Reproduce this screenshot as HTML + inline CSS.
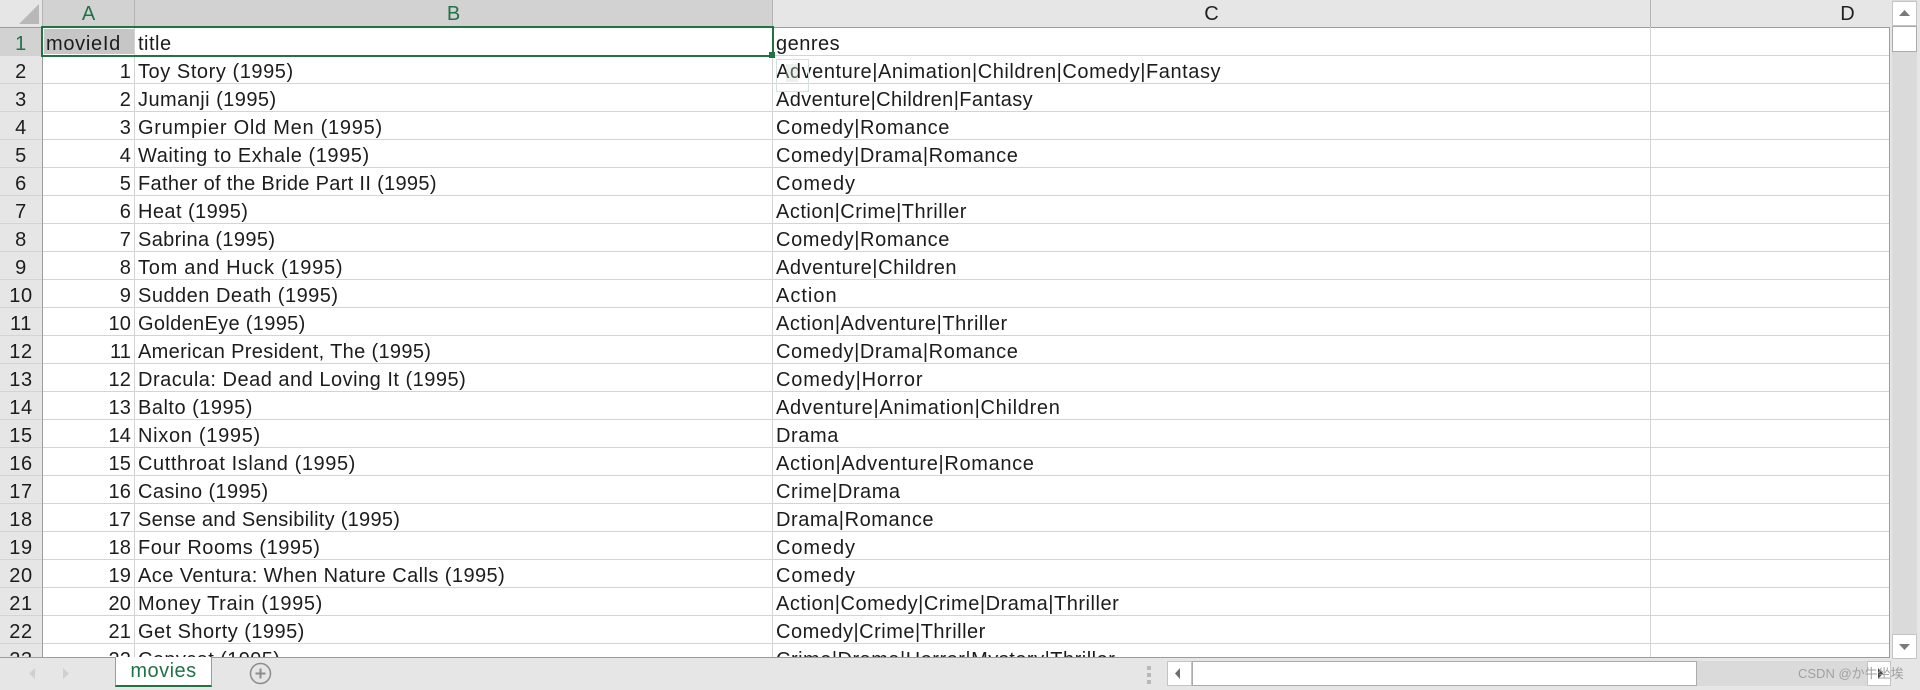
<!DOCTYPE html>
<html><head><meta charset="utf-8"><style>
html,body{margin:0;padding:0;background:#e6e6e6}
#p{position:relative;width:1920px;height:690px;overflow:hidden;background:#e6e6e6;font-family:"Liberation Sans","Noto Sans CJK SC",sans-serif;color:#1c1c1c}
#p div{position:absolute;box-sizing:border-box}
.t{font-size:20px;line-height:28px;height:28px;white-space:nowrap;letter-spacing:.1px}
.n{text-align:right;width:88px;left:43px}
.r{text-align:center;width:42px;left:0;height:28px;font-size:20px;line-height:28px;letter-spacing:.6px}
.h{height:1px;left:0;width:1889px;background:#d4d4d4}
.v{width:1px;top:27px;height:630px;background:#d4d4d4}
.hc{font-size:20px;line-height:27px;top:1px;height:27px;text-align:center}
</style></head><body><div id="p">
<div style="left:0;top:0;width:1920px;height:27px;background:#e6e6e6"></div>
<div style="left:43px;top:0;width:730px;height:27px;background:#d2d2d2"></div>
<div style="left:42px;top:0;width:1px;height:27px;background:#b4b4b4"></div>
<div style="left:134px;top:0;width:1px;height:27px;background:#b4b4b4"></div>
<div style="left:772px;top:0;width:1px;height:27px;background:#b4b4b4"></div>
<div style="left:1650px;top:0;width:1px;height:27px;background:#b4b4b4"></div>
<svg style="position:absolute;left:0;top:0" width="42" height="27"><polygon points="19,24 39,24 39,4" fill="#b8b8b8"/></svg>
<div class="hc" style="left:43px;width:91px;color:#217346">A</div>
<div class="hc" style="left:135px;width:637px;color:#217346">B</div>
<div class="hc" style="left:773px;width:877px;color:#222">C</div>
<div class="hc" style="left:1840px;width:15px;color:#222">D</div>
<div style="left:0;top:27px;width:1889px;height:1px;background:#9c9c9c"></div>
<div style="left:43px;top:28px;width:1846px;height:629px;background:#fff"></div>
<div class="h" style="top:55px"></div><div class="h" style="top:83px"></div><div class="h" style="top:111px"></div><div class="h" style="top:139px"></div><div class="h" style="top:167px"></div><div class="h" style="top:195px"></div><div class="h" style="top:223px"></div><div class="h" style="top:251px"></div><div class="h" style="top:279px"></div><div class="h" style="top:307px"></div><div class="h" style="top:335px"></div><div class="h" style="top:363px"></div><div class="h" style="top:391px"></div><div class="h" style="top:419px"></div><div class="h" style="top:447px"></div><div class="h" style="top:475px"></div><div class="h" style="top:503px"></div><div class="h" style="top:531px"></div><div class="h" style="top:559px"></div><div class="h" style="top:587px"></div><div class="h" style="top:615px"></div><div class="h" style="top:643px"></div>
<div class="v" style="left:134px"></div><div class="v" style="left:772px"></div><div class="v" style="left:1650px"></div>
<div style="left:42px;top:28px;width:1px;height:629px;background:#9c9c9c"></div>
<div style="left:1889px;top:27px;width:1px;height:630px;background:#9c9c9c"></div>
<div style="left:0;top:28px;width:42px;height:28px;background:#d2d2d2"></div>
<div class="r" style="top:30px;color:#217346">1</div>
<div class="r" style="top:58px">2</div><div class="r" style="top:86px">3</div><div class="r" style="top:114px">4</div><div class="r" style="top:142px">5</div><div class="r" style="top:170px">6</div><div class="r" style="top:198px">7</div><div class="r" style="top:226px">8</div><div class="r" style="top:254px">9</div><div class="r" style="top:282px">10</div><div class="r" style="top:310px">11</div><div class="r" style="top:338px">12</div><div class="r" style="top:366px">13</div><div class="r" style="top:394px">14</div><div class="r" style="top:422px">15</div><div class="r" style="top:450px">16</div><div class="r" style="top:478px">17</div><div class="r" style="top:506px">18</div><div class="r" style="top:534px">19</div><div class="r" style="top:562px">20</div><div class="r" style="top:590px">21</div><div class="r" style="top:618px">22</div><div class="r" style="top:646px">23</div>
<div style="left:44px;top:29px;width:90px;height:25px;background:#c6c6c6"></div>
<div class="t" style="left:46px;top:30px;letter-spacing:.7px">movieId</div><div class="t" style="left:138px;top:30px;letter-spacing:.5px">title</div><div class="t" style="left:776px;top:30px;letter-spacing:.5px">genres</div>
<div class="t n" style="top:58px">1</div><div class="t" style="left:138px;top:58px;letter-spacing:.56px">Toy Story (1995)</div><div class="t" style="left:776px;top:58px;letter-spacing:.56px">Adventure|Animation|Children|Comedy|Fantasy</div>
<div class="t n" style="top:86px">2</div><div class="t" style="left:138px;top:86px;letter-spacing:.45px">Jumanji (1995)</div><div class="t" style="left:776px;top:86px;letter-spacing:.38px">Adventure|Children|Fantasy</div>
<div class="t n" style="top:114px">3</div><div class="t" style="left:138px;top:114px;letter-spacing:.74px">Grumpier Old Men (1995)</div><div class="t" style="left:776px;top:114px;letter-spacing:.62px">Comedy|Romance</div>
<div class="t n" style="top:142px">4</div><div class="t" style="left:138px;top:142px;letter-spacing:.56px">Waiting to Exhale (1995)</div><div class="t" style="left:776px;top:142px;letter-spacing:.6px">Comedy|Drama|Romance</div>
<div class="t n" style="top:170px">5</div><div class="t" style="left:138px;top:170px;letter-spacing:.32px">Father of the Bride Part II (1995)</div><div class="t" style="left:776px;top:170px;letter-spacing:.9px">Comedy</div>
<div class="t n" style="top:198px">6</div><div class="t" style="left:138px;top:198px;letter-spacing:.43px">Heat (1995)</div><div class="t" style="left:776px;top:198px;letter-spacing:.5px">Action|Crime|Thriller</div>
<div class="t n" style="top:226px">7</div><div class="t" style="left:138px;top:226px;letter-spacing:.36px">Sabrina (1995)</div><div class="t" style="left:776px;top:226px;letter-spacing:.62px">Comedy|Romance</div>
<div class="t n" style="top:254px">8</div><div class="t" style="left:138px;top:254px;letter-spacing:.74px">Tom and Huck (1995)</div><div class="t" style="left:776px;top:254px;letter-spacing:.57px">Adventure|Children</div>
<div class="t n" style="top:282px">9</div><div class="t" style="left:138px;top:282px;letter-spacing:.49px">Sudden Death (1995)</div><div class="t" style="left:776px;top:282px;letter-spacing:1px">Action</div>
<div class="t n" style="top:310px">10</div><div class="t" style="left:138px;top:310px;letter-spacing:.33px">GoldenEye (1995)</div><div class="t" style="left:776px;top:310px;letter-spacing:.54px">Action|Adventure|Thriller</div>
<div class="t n" style="top:338px">11</div><div class="t" style="left:138px;top:338px;letter-spacing:.34px">American President, The (1995)</div><div class="t" style="left:776px;top:338px;letter-spacing:.6px">Comedy|Drama|Romance</div>
<div class="t n" style="top:366px">12</div><div class="t" style="left:138px;top:366px;letter-spacing:.5px">Dracula: Dead and Loving It (1995)</div><div class="t" style="left:776px;top:366px;letter-spacing:.85px">Comedy|Horror</div>
<div class="t n" style="top:394px">13</div><div class="t" style="left:138px;top:394px;letter-spacing:.5px">Balto (1995)</div><div class="t" style="left:776px;top:394px;letter-spacing:.7px">Adventure|Animation|Children</div>
<div class="t n" style="top:422px">14</div><div class="t" style="left:138px;top:422px;letter-spacing:.7px">Nixon (1995)</div><div class="t" style="left:776px;top:422px;letter-spacing:.6px">Drama</div>
<div class="t n" style="top:450px">15</div><div class="t" style="left:138px;top:450px;letter-spacing:.58px">Cutthroat Island (1995)</div><div class="t" style="left:776px;top:450px;letter-spacing:.66px">Action|Adventure|Romance</div>
<div class="t n" style="top:478px">16</div><div class="t" style="left:138px;top:478px;letter-spacing:.38px">Casino (1995)</div><div class="t" style="left:776px;top:478px;letter-spacing:.55px">Crime|Drama</div>
<div class="t n" style="top:506px">17</div><div class="t" style="left:138px;top:506px;letter-spacing:.27px">Sense and Sensibility (1995)</div><div class="t" style="left:776px;top:506px;letter-spacing:.56px">Drama|Romance</div>
<div class="t n" style="top:534px">18</div><div class="t" style="left:138px;top:534px;letter-spacing:.53px">Four Rooms (1995)</div><div class="t" style="left:776px;top:534px;letter-spacing:.9px">Comedy</div>
<div class="t n" style="top:562px">19</div><div class="t" style="left:138px;top:562px;letter-spacing:.43px">Ace Ventura: When Nature Calls (1995)</div><div class="t" style="left:776px;top:562px;letter-spacing:.9px">Comedy</div>
<div class="t n" style="top:590px">20</div><div class="t" style="left:138px;top:590px;letter-spacing:.64px">Money Train (1995)</div><div class="t" style="left:776px;top:590px;letter-spacing:.53px">Action|Comedy|Crime|Drama|Thriller</div>
<div class="t n" style="top:618px">21</div><div class="t" style="left:138px;top:618px;letter-spacing:.46px">Get Shorty (1995)</div><div class="t" style="left:776px;top:618px;letter-spacing:.5px">Comedy|Crime|Thriller</div>
<div class="t n" style="top:646px">22</div><div class="t" style="left:138px;top:646px;letter-spacing:.4px">Copycat (1995)</div><div class="t" style="left:776px;top:646px;letter-spacing:.5px">Crime|Drama|Horror|Mystery|Thriller</div>
<div style="left:776px;top:59px;width:33px;height:33px;border:1px solid #d3e3da"></div>
<div style="left:786px;top:64px;width:12px;height:18px;background:rgba(200,215,205,.35)"></div>
<div style="left:41px;top:26px;width:733px;height:31px;border:2px solid #217346"></div>
<div style="left:769px;top:52px;width:6px;height:6px;background:#217346"></div>
<div style="left:0;top:657px;width:1920px;height:33px;background:#e6e6e6"></div>
<div style="left:0;top:657px;width:1890px;height:1px;background:#9c9c9c"></div>
<svg style="position:absolute;left:0;top:657px" width="80" height="33"><polygon points="29,16.5 35,11 35,22" fill="#d0d0d0"/><polygon points="69,16.5 63,11 63,22" fill="#d0d0d0"/></svg>
<div style="left:115px;top:657px;width:97px;height:30px;background:#fff;border-left:1px solid #9c9c9c;border-right:1px solid #9c9c9c;border-bottom:2px solid #217346"></div>
<div style="left:116px;top:658px;width:95px;height:27px;text-align:center;font-size:20px;line-height:27px;color:#217346;letter-spacing:.5px">movies</div>
<svg style="position:absolute;left:248px;top:661px" width="26" height="26"><circle cx="12.5" cy="12.5" r="10" fill="none" stroke="#8c8c8c" stroke-width="1.5"/><path d="M7.5 12.5h10M12.5 7.5v10" stroke="#8c8c8c" stroke-width="2"/></svg>
<div style="left:1147px;top:666px;width:4px;height:4px;background:#b8b8b8"></div><div style="left:1147px;top:673px;width:4px;height:4px;background:#b8b8b8"></div><div style="left:1147px;top:680px;width:4px;height:4px;background:#b8b8b8"></div>
<div style="left:1167px;top:661px;width:25px;height:25px;background:#fff;border:1px solid #c4c4c4"></div>
<svg style="position:absolute;left:1167px;top:661px" width="25" height="25"><polygon points="8,12.5 13,7 13,18" fill="#6e6e6e"/></svg>
<div style="left:1192px;top:661px;width:505px;height:25px;background:#fff;border:1px solid #ababab"></div>
<div style="left:1697px;top:661px;width:170px;height:25px;background:#dadada"></div>
<div style="left:1867px;top:661px;width:24px;height:25px;background:#fff;border:1px solid #c4c4c4"></div>
<svg style="position:absolute;left:1867px;top:661px" width="24" height="25"><polygon points="16,12.5 11,7 11,18" fill="#4a4a4a"/></svg>
<div style="left:1892px;top:0;width:25px;height:657px;background:#dadada"></div>
<div style="left:1892px;top:1px;width:25px;height:25px;background:#fff;border:1px solid #c4c4c4"></div>
<svg style="position:absolute;left:1892px;top:1px" width="25" height="25"><polygon points="7,15 18,15 12.5,9" fill="#7a7a7a"/></svg>
<div style="left:1892px;top:26px;width:25px;height:26px;background:#fff;border:1px solid #ababab"></div>
<div style="left:1892px;top:634px;width:25px;height:25px;background:#fff;border:1px solid #c4c4c4"></div>
<svg style="position:absolute;left:1892px;top:634px" width="25" height="25"><polygon points="7,10 18,10 12.5,16" fill="#7a7a7a"/></svg>
<div style="left:1798px;top:664px;width:122px;height:20px;font-size:13px;line-height:20px;color:#a0a0a0;white-space:nowrap">CSDN @か牛坐埃</div>
</div></body></html>
